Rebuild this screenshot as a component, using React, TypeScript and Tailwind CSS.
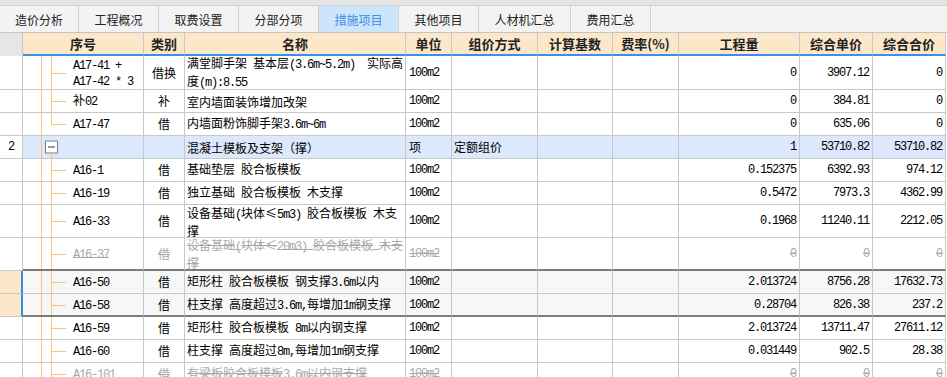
import React from "react";

const CJK = "font-['Noto_Sans_CJK_SC','Noto_Sans',sans-serif]";
const MONO = "font-['Liberation_Mono',monospace] text-[12px] tracking-[-1.2px]";
const GRID =
  "grid grid-cols-[23px_121px_41px_221px_46px_86px_75px_66px_121px_73px_73px]";
const ORANGE = "bg-[#f8c580]";

function Mixed({ text }: { text: string }) {
  const parts = text.split(/([\x20-\x7e]+)/);
  return (
    <>
      {parts.map((p, i) =>
        p === "" ? null : /^[\x20-\x7e]+$/.test(p) ? (
          <span key={i} className={MONO}>
            {p}
          </span>
        ) : (
          <span key={i}>{p}</span>
        )
      )}
    </>
  );
}

type Tree = "child" | "last" | "parent";

type Row = {
  num?: string;
  code: string[];
  cat: string;
  name: string[];
  unit: string;
  method?: string;
  qty: string;
  price: string;
  total: string;
  tree: Tree;
  tall?: 33 | 34;
  deleted?: boolean;
  selected?: boolean;
  darkBottom?: boolean;
};

const rows: Row[] = [
  {
    code: ["A17-41 +", "A17-42 * 3"],
    cat: "借换",
    name: ["满堂脚手架 基本层(3.6m~5.2m)  实际高", "度(m):8.55"],
    unit: "100m2",
    qty: "0",
    price: "3907.12",
    total: "0",
    tree: "child",
    tall: 34,
  },
  { code: ["补02"], cat: "补", name: ["室内墙面装饰增加改架"], unit: "100m2", qty: "0", price: "384.81", total: "0", tree: "child" },
  { code: ["A17-47"], cat: "借", name: ["内墙面粉饰脚手架3.6m~6m"], unit: "100m2", qty: "0", price: "635.06", total: "0", tree: "last" },
  {
    num: "2",
    code: [""],
    cat: "",
    name: ["混凝土模板及支架（撑）"],
    unit: "项",
    method: "定额组价",
    qty: "1",
    price: "53710.82",
    total: "53710.82",
    tree: "parent",
  },
  { code: ["A16-1"], cat: "借", name: ["基础垫层 胶合板模板"], unit: "100m2", qty: "0.152375", price: "6392.93", total: "974.12", tree: "child" },
  { code: ["A16-19"], cat: "借", name: ["独立基础 胶合板模板 木支撑"], unit: "100m2", qty: "0.5472", price: "7973.3", total: "4362.99", tree: "child" },
  {
    code: ["A16-33"],
    cat: "借",
    name: ["设备基础(块体≤5m3) 胶合板模板 木支", "撑"],
    unit: "100m2",
    qty: "0.1968",
    price: "11240.11",
    total: "2212.05",
    tree: "child",
    tall: 33,
  },
  {
    code: ["A16-37"],
    cat: "借",
    name: ["设备基础(块体≤20m3) 胶合板模板 木支", "撑"],
    unit: "100m2",
    qty: "0",
    price: "0",
    total: "0",
    tree: "child",
    tall: 33,
    deleted: true,
    darkBottom: true,
  },
  {
    code: ["A16-50"],
    cat: "借",
    name: ["矩形柱 胶合板模板 钢支撑3.6m以内"],
    unit: "100m2",
    qty: "2.013724",
    price: "8756.28",
    total: "17632.73",
    tree: "child",
    selected: true,
  },
  {
    code: ["A16-58"],
    cat: "借",
    name: ["柱支撑 高度超过3.6m,每增加1m钢支撑"],
    unit: "100m2",
    qty: "0.28704",
    price: "826.38",
    total: "237.2",
    tree: "child",
    selected: true,
    darkBottom: true,
  },
  { code: ["A16-59"], cat: "借", name: ["矩形柱 胶合板模板 8m以内钢支撑"], unit: "100m2", qty: "2.013724", price: "13711.47", total: "27611.12", tree: "child" },
  { code: ["A16-60"], cat: "借", name: ["柱支撑 高度超过8m,每增加1m钢支撑"], unit: "100m2", qty: "0.031449", price: "902.5", total: "28.38", tree: "child" },
  {
    code: ["A16-101"],
    cat: "借",
    name: ["有梁板胶合板模板3.6m以内钢支撑"],
    unit: "100m2",
    qty: "0",
    price: "0",
    total: "0",
    tree: "child",
    deleted: true,
  },
];

const tabs: { label: string; w: string; active?: boolean }[] = [
  { label: "造价分析", w: "w-[79px]" },
  { label: "工程概况", w: "w-[80px]" },
  { label: "取费设置", w: "w-[80px]" },
  { label: "分部分项", w: "w-[80px]" },
  { label: "措施项目", w: "w-[80px]", active: true },
  { label: "其他项目", w: "w-[80px]" },
  { label: "人材机汇总", w: "w-[92px]" },
  { label: "费用汇总", w: "w-[80px]" },
];

const headers = ["序号", "类别", "名称", "单位", "组价方式", "计算基数", "费率(%)", "工程量", "综合单价", "综合合价"];

function DataRow({ r }: { r: Row }) {
  const h = r.tall === 34 ? "h-[34px]" : r.tall === 33 ? "h-[33px]" : "h-[23px]";
  const bg = r.tree === "parent" ? "bg-[#dce8fb]" : r.selected ? "bg-[#f7f7f7]" : "bg-white";
  const bottom = r.darkBottom ? "border-b-2 border-b-[#7c7c7c]" : "border-b border-b-[#c8c8c8]";
  const txt = r.deleted ? "text-[#a9a9a9] line-through" : "text-black";
  const cell = `border-r border-r-[#c8c8c8] ${bottom} ${bg} ${txt} flex items-center overflow-hidden`;
  const num = (v: string) => (
    <div className={`${cell} justify-end pr-[3px]`}>
      <span className={MONO}>{v}</span>
    </div>
  );
  return (
    <div className={`${GRID} ${h}`}>
      <div
        className={`${
          r.selected ? "bg-[#fde7c9] border-r-2 border-r-[#3b8ee6]" : "bg-white border-r border-r-[#c8c8c8]"
        } border-b border-b-[#c8c8c8] flex items-center justify-center`}
      >
        {r.num && <span className={MONO}>{r.num}</span>}
      </div>
      <div className={`${cell} relative`}>
        <span className={`absolute left-[18px] top-0 bottom-0 w-px ${ORANGE}`} />
        {r.tree === "child" && <span className={`absolute left-[28px] top-0 bottom-0 w-px ${ORANGE}`} />}
        {r.tree === "last" && <span className={`absolute left-[28px] top-0 h-1/2 w-px ${ORANGE}`} />}
        {r.tree !== "parent" && <span className={`absolute left-[28px] top-1/2 w-[15px] h-px ${ORANGE}`} />}
        {r.tree === "parent" && (
          <>
            <span className={`absolute left-[28px] top-1/2 bottom-0 w-px ${ORANGE}`} />
            <span className="absolute left-[22px] top-1/2 -translate-y-1/2 w-[13px] h-[13px] border border-[#7a7a7a] bg-white flex items-center justify-center">
              <span className="w-[7px] h-px bg-[#333]" />
            </span>
          </>
        )}
        <div className="pl-[50px] leading-[14px] whitespace-pre text-[12px]">
          {r.code.map((c, i) => (
            <div key={i}>
              <Mixed text={c} />
            </div>
          ))}
        </div>
      </div>
      <div className={`${cell} justify-center text-[12px]`}>{r.cat}</div>
      <div className={`${cell} pl-[2px] text-[12px]`}>
        <div className="leading-[15px] whitespace-pre">
          {r.name.map((n, i) => (
            <div key={i}>
              <Mixed text={n} />
            </div>
          ))}
        </div>
      </div>
      <div className={`${cell} pl-[3px] text-[12px]`}>
        <Mixed text={r.unit} />
      </div>
      <div className={`${cell} pl-[2px] text-[12px]`}>{r.method ?? ""}</div>
      <div className={cell} />
      <div className={cell} />
      {num(r.qty)}
      {num(r.price)}
      {num(r.total)}
    </div>
  );
}

export default function App() {
  return (
    <div className={`w-[947px] h-[377px] overflow-hidden bg-white ${CJK}`}>
      <div className="h-[6px] bg-[#e4e4e4] border-b border-b-[#d0d0d0]" />
      <div className="h-[27px] flex bg-[#f3f3f3] border-b border-b-[#c4c4c4]">
        {tabs.map((t) => (
          <div
            key={t.label}
            className={`${t.w} h-full flex items-center justify-center pt-[2px] border-r border-r-[#d0d0d0] text-[12px] ${
              t.active ? "bg-[#cde5fa] text-[#3d8ee6]" : "text-[#222]"
            }`}
          >
            {t.label}
          </div>
        ))}
      </div>
      <div className={`${GRID} h-[23px]`}>
        <div className="bg-[#e6e6e6] border-r border-r-[#c4c4c4] border-b-2 border-b-[#e6e6e6]" />
        {headers.map((hd) => (
          <div
            key={hd}
            className="bg-[#fde7c9] border-r border-r-[#c8c8c8] border-b-2 border-b-[#3c8ee8] flex items-center justify-center text-[13px] font-bold text-[#222]"
          >
            {hd}
          </div>
        ))}
      </div>
      {rows.map((r, i) => (
        <DataRow key={i} r={r} />
      ))}
    </div>
  );
}
